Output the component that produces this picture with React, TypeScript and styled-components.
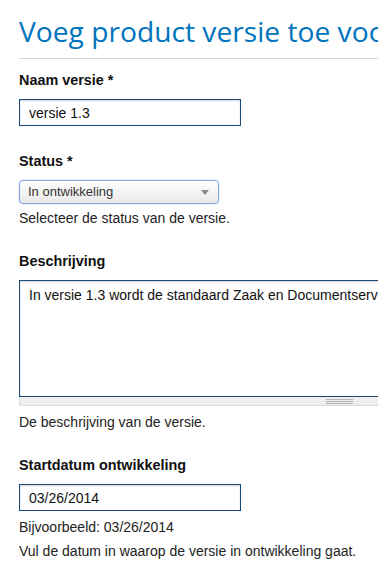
import React from 'react';
import styled, { createGlobalStyle } from 'styled-components';

const GlobalStyle = createGlobalStyle`
  html, body {
    margin: 0;
    padding: 0;
    background: #fff;
    overflow: hidden;
  }
  body {
    font-family: "Liberation Sans", Arial, sans-serif;
    color: #222;
  }
`;

const Page = styled.div`
  width: 700px;
  padding: 0 0 0 19px;
`;

const Title = styled.h1`
  margin: 0;
  padding-top: 12px;
  font-family: "Open Sans", "Noto Sans", sans-serif;
  font-weight: 400;
  font-size: 28.2px;
  line-height: 39px;
  color: #0074bd;
  white-space: nowrap;
`;

const Rule = styled.hr`
  margin: 7px 0 13px;
  border: 0;
  border-top: 1px solid #d4d4d4;
`;

const FormItem = styled.div`
  margin-bottom: 27px;
`;

const Label = styled.label`
  display: block;
  font-weight: 700;
  font-size: 14.4px;
  line-height: 16px;
  color: #111;
  margin-bottom: 11px;
`;

const TextInput = styled.input`
  box-sizing: border-box;
  display: block;
  width: 222px;
  height: 27px;
  padding: 0 9px;
  border: 1px solid #174a78;
  box-shadow: inset 0 1px 2px rgba(0, 0, 0, 0.18);
  font-family: "Liberation Sans", Arial, sans-serif;
  font-size: 14px;
  color: #111;
  outline: none;
`;

const SelectBox = styled.div`
  box-sizing: border-box;
  position: relative;
  width: 200px;
  height: 24px;
  border: 1px solid #7fa8e8;
  border-radius: 4px;
  background: linear-gradient(#ffffff, #e9e9e9);
  box-shadow: 0 0 2px rgba(90, 140, 220, 0.4);
  font-size: 13px;
  line-height: 22px;
  padding-left: 8px;
  color: #333;
`;

const Arrow = styled.span`
  position: absolute;
  right: 9px;
  top: 9px;
  width: 0;
  height: 0;
  border-left: 4px solid transparent;
  border-right: 4px solid transparent;
  border-top: 5px solid #888;
`;

const Description = styled.div<{ gap?: number }>`
  font-size: 14px;
  line-height: 16px;
  color: #222;
  margin-top: ${p => p.gap ?? 6}px;
`;

const AreaWrap = styled.div`
  width: 641px;
`;

const TextArea = styled.textarea`
  box-sizing: border-box;
  display: block;
  width: 100%;
  height: 117px;
  margin: 0;
  padding: 6px 9px;
  border: 1px solid #174a78;
  box-shadow: inset 0 1px 2px rgba(0, 0, 0, 0.18);
  font-family: "Liberation Sans", Arial, sans-serif;
  font-size: 14px;
  color: #111;
  resize: none;
  outline: none;
`;

const Grippie = styled.div`
  box-sizing: border-box;
  height: 9px;
  border: 1px solid #dcdcdc;
  border-top: 0;
  background: #eeeeee;
  display: flex;
  justify-content: center;
  align-items: center;
`;

const GripLines = styled.span`
  width: 27px;
  height: 5px;
  background: repeating-linear-gradient(#b4b4b4 0 1px, transparent 1px 2px);
`;

export default function App() {
  return (
    <>
      <GlobalStyle />
      <Page>
        <Title>Voeg product versie toe voor Zaak en Documentservices</Title>
        <Rule />

        <FormItem>
          <Label>Naam versie *</Label>
          <TextInput defaultValue="versie 1.3" />
        </FormItem>

        <FormItem>
          <Label>Status *</Label>
          <SelectBox>
            In ontwikkeling
            <Arrow />
          </SelectBox>
          <Description>Selecteer de status van de versie.</Description>
        </FormItem>

        <FormItem>
          <Label>Beschrijving</Label>
          <AreaWrap>
            <TextArea defaultValue="In versie 1.3 wordt de standaard Zaak en Documentservices geïmplementeerd." />
            <Grippie>
              <GripLines />
            </Grippie>
          </AreaWrap>
          <Description gap={8}>De beschrijving van de versie.</Description>
        </FormItem>

        <FormItem>
          <Label>Startdatum ontwikkeling</Label>
          <TextInput defaultValue="03/26/2014" />
          <Description gap={8}>Bijvoorbeeld: 03/26/2014</Description>
          <Description gap={8}>Vul de datum in waarop de versie in ontwikkeling gaat.</Description>
        </FormItem>
      </Page>
    </>
  );
}
